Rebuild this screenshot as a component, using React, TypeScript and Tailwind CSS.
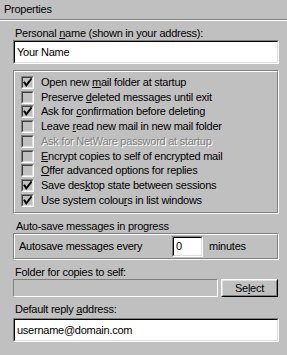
import React from "react";

const font = { fontFamily: '"Liberation Sans", Arial, sans-serif' };

function Sunken({ children, className = "", inner = "bg-white" }: { children?: React.ReactNode; className?: string; inner?: string }) {
  return (
    <div className={`border border-t-[#808080] border-l-[#808080] border-b-white border-r-white ${className}`}>
      <div className={`h-full w-full border border-t-black border-l-black border-b-[#dfdfdf] border-r-[#dfdfdf] ${inner}`}>{children}</div>
    </div>
  );
}

function Check() {
  return (
    <svg width="9" height="9" viewBox="0 0 9 9" className="block">
      <path d="M1.5 4.5 L3.3 7.3 L8 1.2" stroke="black" strokeWidth="1.9" fill="none" strokeLinecap="square" />
    </svg>
  );
}

function Box({ checked }: { checked: boolean }) {
  return (
    <div className="w-[13px] h-[13px] shrink-0 border border-t-[#808080] border-l-[#808080] border-b-white border-r-white">
      <div className="w-full h-full border border-t-[#404040] border-l-[#404040] border-b-[#dfdfdf] border-r-[#dfdfdf] bg-[#c0c0c0] flex items-center justify-center">
        {checked && <Check />}
      </div>
    </div>
  );
}

function Row({ checked, disabled, children }: { checked?: boolean; disabled?: boolean; children: React.ReactNode }) {
  return (
    <div className="h-[14.75px] flex items-center pl-[6px]">
      <Box checked={!!checked} />
      <span
        className={`ml-[7px] leading-none whitespace-nowrap ${disabled ? "text-[#808080] [text-shadow:1px_1px_0_#ffffff]" : "text-black"}`}
      >
        {children}
      </span>
    </div>
  );
}

function Etched({ children, className = "" }: { children: React.ReactNode; className?: string }) {
  return (
    <div className={`border border-t-[#808080] border-l-[#808080] border-b-white border-r-white ${className}`}>
      <div className="h-full w-full border border-t-white border-l-white border-b-[#808080] border-r-[#808080]">{children}</div>
    </div>
  );
}

export default function App() {
  return (
    <div style={font} className="w-[287px] h-[355px] bg-[#c0c0c0] text-[11px] tracking-[-0.25px] text-black overflow-hidden">
      <div className="h-[19px] pl-[4px] flex items-center">Properties</div>
      <div className="h-px bg-[#808080]" />
      <div className="h-px bg-white" />
      <div className="pl-[13px] pr-[8px]">
        <div className="mt-[6px] h-[13px] pl-[2px] leading-[13px]">
          Personal <u>n</u>ame (shown in your address):
        </div>
        <Sunken className="h-[24px]">
          <div className="pl-[2px] leading-[20px] h-[20px]">Your Name</div>
        </Sunken>

        <Etched className="mt-[6px] h-[144px]">
          <div className="pt-[3px]">
            <Row checked>Open new <u>m</u>ail folder at startup</Row>
            <Row>Preserve <u>d</u>eleted messages until exit</Row>
            <Row checked>Ask for <u>c</u>onfirmation before deleting</Row>
            <Row>Leave <u>r</u>ead new mail in new mail folder</Row>
            <Row disabled>Ask for NetWare password at startup</Row>
            <Row><u>E</u>ncrypt copies to self of encrypted mail</Row>
            <Row><u>O</u>ffer advanced options for replies</Row>
            <Row checked>Save des<u>k</u>top state between sessions</Row>
            <Row checked>Use system colou<u>r</u>s in list windows</Row>
          </div>
        </Etched>

        <div className="mt-[5px] h-[14px] pl-[3px] leading-[14px]">Auto-save messages in progress</div>
        <Etched className="h-[27px]">
          <div className="flex items-center h-full pl-[4px]">
            <span className="w-[153px] shrink-0">Autosave messages every</span>
            <Sunken className="w-[31px] h-[21px] shrink-0">
              <div className="pl-[2px] leading-[17px]">0</div>
            </Sunken>
            <span className="ml-[6px]">minutes</span>
          </div>
        </Etched>

        <div className="mt-[6px] h-[13px] pl-[2px] leading-[13px]">Folder for copies to self:</div>
        <div className="flex gap-[3px] h-[18px]">
          <div className="w-[205px] h-full border border-t-[#808080] border-l-[#808080] border-b-white border-r-white bg-[#c0c0c0]" />
          <div className="w-[57px] h-full border border-t-white border-l-white border-b-black border-r-black">
            <div className="h-full w-full border border-t-[#dfdfdf] border-l-[#dfdfdf] border-b-[#808080] border-r-[#808080] flex items-center justify-center leading-none">
              Se<u>l</u>ect
            </div>
          </div>
        </div>

        <div className="mt-[6px] h-[13px] pl-[2px] leading-[13px]">
          Default reply <u>a</u>ddress:
        </div>
        <Sunken className="h-[24px] mt-[2px]">
          <div className="pl-[2px] leading-[20px] h-[20px]">username@domain.com</div>
        </Sunken>
      </div>
    </div>
  );
}
